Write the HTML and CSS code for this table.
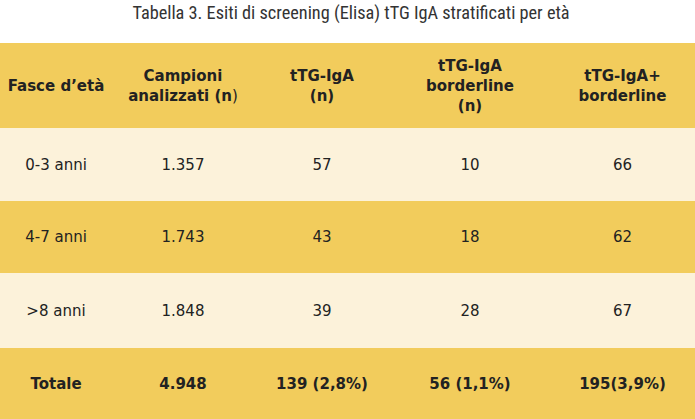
FILE: index.html
```html
<!DOCTYPE html>
<html lang="it">
<head>
<meta charset="utf-8">
<link rel="stylesheet" href="styles.css">
</head>
<body>
<div class="caption"><span class="caption-text">Tabella 3. Esiti di screening (Elisa) tTG IgA stratificati per età</span></div>
<table class="results">
  <colgroup>
    <col class="c1"><col class="c2"><col class="c3"><col class="c4"><col class="c5">
  </colgroup>
  <thead>
    <tr class="head">
      <th>Fasce d’età</th>
      <th>Campioni<br>analizzati (n<span class="thin">)</span></th>
      <th>tTG-IgA<br>(n)</th>
      <th>tTG-IgA<br>borderline<br>(n)</th>
      <th>tTG-IgA+<br>borderline</th>
    </tr>
  </thead>
  <tbody>
    <tr class="light r1"><td>0-3 anni</td><td>1.357</td><td>57</td><td>10</td><td>66</td></tr>
    <tr class="dark r2"><td>4-7 anni</td><td>1.743</td><td>43</td><td>18</td><td>62</td></tr>
    <tr class="light r3"><td>&gt;8 anni</td><td>1.848</td><td>39</td><td>28</td><td>67</td></tr>
    <tr class="dark total"><td>Totale</td><td>4.948</td><td>139 (2,8%)</td><td>56 (1,1%)</td><td>195(3,9%)</td></tr>
  </tbody>
</table>
</body>
</html>
```
FILE: styles.css
```css
html, body {
  margin: 0;
  padding: 0;
  background: #ffffff;
}
body {
  width: 695px;
  height: 419px;
  overflow: hidden;
  font-family: "DejaVu Sans", Verdana, sans-serif;
  color: #222222;
}
.caption {
  height: 43px;
  display: flex;
  justify-content: center;
  padding-left: 7px;
  box-sizing: border-box;
}
.caption-text {
  font-family: "Roboto Condensed", "Liberation Sans Narrow", "DejaVu Sans Condensed", sans-serif;
  font-size: 18.3px;
  line-height: 25px;
  color: #333333;
  white-space: nowrap;
}
.results {
  width: 695px;
  border-collapse: collapse;
  table-layout: fixed;
  font-size: 15px;
}
.c1 { width: 112px; }
.c2 { width: 142px; }
.c3 { width: 136px; }
.c4 { width: 160px; }
.c5 { width: 145px; }
.results th, .results td {
  padding: 0;
  text-align: center;
  vertical-align: middle;
}
.results th {
  font-weight: bold;
  line-height: 20px;
}
.thin { font-weight: normal; }
.head { height: 85px; background: #f2cc5c; }
.r1 { height: 73px; }
.r2 { height: 72px; }
.r3 { height: 75px; }
.total { height: 71px; font-weight: bold; }
.light { background: #fcf2da; }
.dark { background: #f2cc5c; }
```
